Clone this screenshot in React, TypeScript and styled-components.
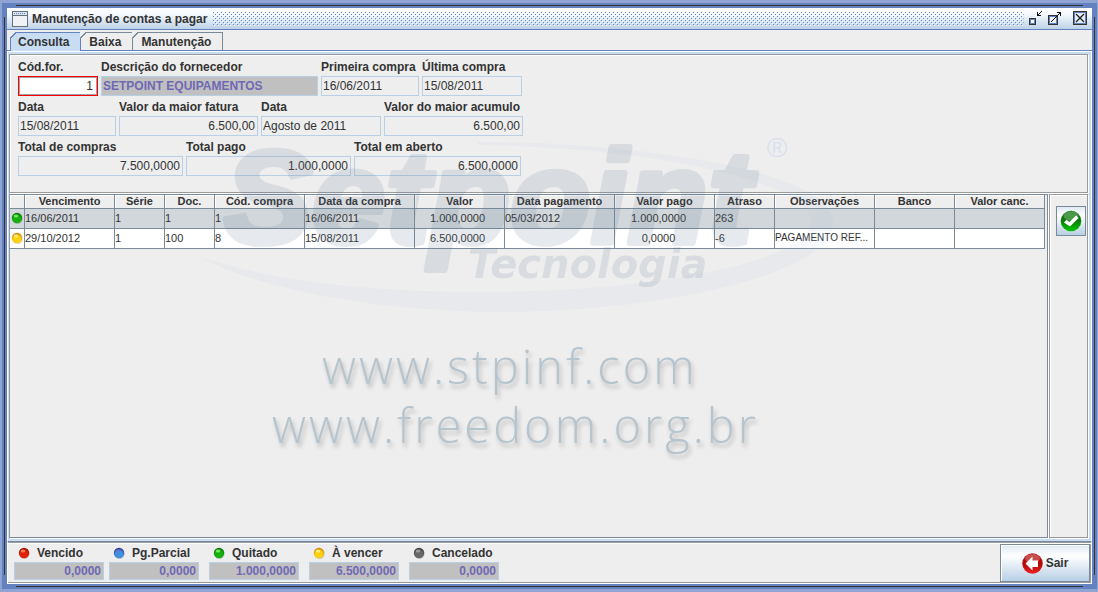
import React from "react";
import styled, { createGlobalStyle, css } from "styled-components";

const c = {
  blue: "#6382bf",
  panel: "#eeeeee",
  line: "#7a8a99",
  soft: "#b8cfe5",
  tab: "#c8ddf2",
  etch: "#9a9a9a",
  text: "#333333",
  gray: "#c0c0c0",
  violet: "#7068b4",
};

const GlobalStyle = createGlobalStyle`
  * { box-sizing: border-box; }
  body {
    margin: 0;
    font: 12px/16px "Liberation Sans", Arial, sans-serif;
    color: ${c.text};
  }
  input, button { font: inherit; color: inherit; }
`;

const Desktop = styled.div`
  display: flex;
  min-height: 100vh;
  padding: 3px 1px 3px 2px;
  background: #90a4d4;
`;

const Frame = styled.main`
  position: relative;
  flex: 1;
  min-width: 0;
  display: flex;
  flex-direction: column;
  padding: 5px;
  background: ${c.blue};
  &::before, &::after {
    content: "";
    position: absolute;
    pointer-events: none;
    border: 0 solid ${c.text};
  }
  &::before { inset: 2px 14px; border-width: 1px 0; }
  &::after { inset: 14px 2px; border-width: 0 1px; }
`;

const TitleBar = styled.header`
  display: flex;
  align-items: center;
  height: 22px;
  padding: 0 3px 0 5px;
  border-bottom: 1px solid ${c.blue};
  background: linear-gradient(#ffffff, #f4f8fc 30%, #bdd2e7);
`;

const Title = styled.h1`
  margin: 0 6px 0 4px;
  font-size: 12px;
  line-height: 16px;
  font-weight: bold;
`;

const Grip = styled.svg`
  flex: 1;
  min-width: 0;
  height: 14px;
  margin-top: 1px;
`;

const WindowButtons = styled.div`
  display: flex;
  gap: 4px;
  margin-left: 2px;
`;

const WindowButton = styled.button`
  display: block;
  width: 18px;
  height: 18px;
  padding: 0;
  border: 0;
  background: none;
  svg { display: block; }
  &:last-child { margin-left: 1px; }
`;

const Tabs = styled.div`
  display: flex;
  height: 21px;
  padding: 2px 0 0 3px;
  background: ${c.panel};
  border-bottom: 1px solid ${c.blue};
`;

const Tab = styled.button<{ $active?: boolean }>`
  position: relative;
  height: ${(p) => (p.$active ? 19 : 18)}px;
  padding: 0 11px 0 8px;
  border: 1px solid ${c.line};
  border-width: 1px 1px 0 0;
  background: ${c.panel};
  font-weight: bold;
  line-height: 16px;
  &::before {
    content: "";
    position: absolute;
    left: -1px;
    top: -1px;
    width: 8px;
    height: 8px;
    background: linear-gradient(135deg, ${c.panel} 0 4px, ${c.line} 4px 5px, transparent 5px);
  }
  ${(p) =>
    p.$active &&
    css`
      padding: 0 11px 0 7px;
      border-color: ${c.blue};
      border-left-width: 1px;
      background: ${c.tab};
      &::before {
        background: linear-gradient(135deg, ${c.panel} 0 4px, ${c.blue} 4px 5px, transparent 5px);
      }
    `}
`;

const Content = styled.section`
  flex: 1;
  display: flex;
  flex-direction: column;
  gap: 1px;
  padding: 2px 3px 3px 1px;
  background: ${c.tab};
  border: 1px solid #ffffff;
  border-bottom: 0;
`;

const panelEdge = css`
  border: 1px solid ${c.etch};
  box-shadow: 1px 1px 0 #ffffff, inset 1px 1px 0 #ffffff;
  background: ${c.panel};
`;

const FormPanel = styled.form`
  ${panelEdge}
  padding: 1px 8px 16px;
`;

const FieldRow = styled.div`
  display: flex;
  gap: 3px;
`;

const FieldBox = styled.label<{ $w: number }>`
  display: flex;
  flex-direction: column;
  flex: none;
  width: ${(p) => p.$w}px;
  padding-top: 2px;
  font-weight: bold;
  line-height: 18px;
  white-space: nowrap;
`;

type Look = "plain" | "focus" | "shade";

const Input = styled.input<{ $right?: boolean; $look?: Look }>`
  width: 100%;
  height: 20px;
  padding: 0 2px 0 1px;
  border: 1px solid ${c.soft};
  border-radius: 0;
  outline: 0;
  background: ${c.panel};
  font-weight: normal;
  text-align: ${(p) => (p.$right ? "right" : "left")};
  ${(p) =>
    p.$look === "shade" &&
    css`
      background: ${c.gray};
      color: ${c.violet};
      font-weight: bold;
    `}
  ${(p) =>
    p.$look === "focus" &&
    css`
      border-color: #ff0000;
      background: #ffffff;
      box-shadow: inset 1px 1px 0 #a0a0a0, inset -1px -1px 0 #a0a0a0;
      padding-right: 4px;
    `}
`;

const Work = styled.div`
  flex: 1;
  display: flex;
  gap: 1px;
`;

const ScrollArea = styled.div`
  flex: 1;
  min-width: 0;
  overflow: hidden;
  border: 1px solid ${c.line};
  border-left-color: ${c.etch};
  box-shadow: 1px 1px 0 #ffffff;
  background: ${c.panel};
`;

const Table = styled.table`
  width: 1035px;
  table-layout: fixed;
  border-collapse: separate;
  border-spacing: 0;
  font-size: 11px;
  th, td {
    padding: 0;
    border: 0 solid ${c.line};
    border-width: 0 1px 1px 0;
    overflow: hidden;
    white-space: nowrap;
  }
  th {
    height: 14px;
    line-height: 13px;
    background: ${c.panel};
    box-shadow: inset 1px 1px 0 #ffffff;
    text-align: center;
  }
  td {
    height: 20px;
    line-height: 18px;
    text-align: left;
    vertical-align: top;
  }
`;

const Row = styled.tr<{ $selected?: boolean }>`
  background: ${(p) => (p.$selected ? "#d2d7db" : "#ffffff")};
`;

const Amount = styled.td<{ $inset: number }>`
  && {
    padding-right: ${(p) => p.$inset}px;
    text-align: center;
  }
`;

const Note = styled.td`
  font-size: 10px;
`;

const StatusCell = styled.td`
  svg { display: block; margin: 3px auto 0; }
`;

const SidePanel = styled.div`
  ${panelEdge}
  width: 39px;
  padding: 11px 0 0 6px;
`;

const ActionButton = styled.button`
  display: flex;
  align-items: center;
  justify-content: center;
  gap: 3px;
  padding: 0;
  border: 1px solid ${c.line};
  background: linear-gradient(#dfe9f3, #ffffff 30%, ${c.soft});
  font-weight: bold;
`;

const SquareButton = styled(ActionButton)`
  width: 30px;
  height: 30px;
`;

const ExitButton = styled(ActionButton)`
  width: 90px;
  height: 38px;
  box-shadow: inset 1px 1px 0 #ffffff;
`;

const Footer = styled.footer`
  display: flex;
  justify-content: space-between;
  height: 43px;
  padding: 2px 1px 0 6px;
  border: 1px solid #ffffff;
  border-top: 1px solid ${c.line};
  background: ${c.panel};
  box-shadow: inset 0 1px 0 ${c.etch}, inset 0 2px 0 #ffffff, inset 0 -1px 0 ${c.etch}, inset -1px 0 0 ${c.etch};
`;

const Totals = styled.div`
  display: flex;
  gap: 10px;
`;

const Total = styled.label`
  display: flex;
  flex-direction: column;
  width: 90px;
  font-weight: bold;
  line-height: 18px;
  &:first-child { margin-right: -5px; }
  input { height: 18px; }
`;

const TotalName = styled.span`
  display: flex;
  align-items: center;
  gap: 7px;
  padding-left: 4px;
  svg { flex: none; }
`;

const Watermark = styled.svg`
  position: absolute;
  left: 193px;
  top: 127px;
  pointer-events: none;
`;

type Hue = "red" | "blue" | "green" | "yellow" | "gray";
const hues: Record<Hue, [string, string, string]> = {
  red: ["#ff9a80", "#e02008", "#901000"],
  blue: ["#7070d0", "#3f90e0", "#301870"],
  green: ["#90ff70", "#18b010", "#086008"],
  yellow: ["#fff8a0", "#ffd010", "#c07000"],
  gray: ["#b0b0b0", "#686868", "#303030"],
};

const Ball = ({ hue, id }: { hue: Hue; id: string }) => (
  <svg width="12" height="12" viewBox="0 0 12 12" aria-hidden="true">
    <defs>
      <radialGradient id={id} cx="0.5" cy="0.65" r="0.7">
        <stop offset="0" stopColor={hues[hue][1]} />
        <stop offset="0.5" stopColor={hues[hue][1]} />
        <stop offset="1" stopColor={hues[hue][2]} />
      </radialGradient>
    </defs>
    <circle cx="6.5" cy="6.8" r="5.2" fill="#000" opacity="0.15" />
    <circle cx="6" cy="6" r="5.2" fill={`url(#${id})`} />
    <ellipse cx="5" cy="4" rx="2.3" ry="1.5" fill={hues[hue][0]} opacity="0.75" />
  </svg>
);

const CheckIcon = () => (
  <svg width="22" height="22" viewBox="0 0 22 22" aria-hidden="true">
    <defs>
      <linearGradient id="ok" x1="0" y1="0" x2="0" y2="1">
        <stop offset="0" stopColor="#147814" />
        <stop offset="0.45" stopColor="#0c780c" />
        <stop offset="1" stopColor="#00c800" />
      </linearGradient>
    </defs>
    <circle cx="11" cy="11" r="10.3" fill="url(#ok)" />
    <ellipse cx="11" cy="6" rx="7.5" ry="4.5" fill="#fff" opacity="0.25" />
    <path d="M4 12.6 L6.6 9.8 L9.4 12 L16 5.4 L18.6 8 L10 16.6 Z" fill="#fff" />
  </svg>
);

const BackIcon = () => (
  <svg width="21" height="21" viewBox="0 0 21 21" aria-hidden="true">
    <defs>
      <linearGradient id="back" x1="0" y1="0" x2="0" y2="1">
        <stop offset="0" stopColor="#b81818" />
        <stop offset="0.5" stopColor="#b00808" />
        <stop offset="1" stopColor="#f02020" />
      </linearGradient>
    </defs>
    <circle cx="10.5" cy="10.5" r="10.2" fill="url(#back)" />
    <ellipse cx="10.5" cy="5.5" rx="7.5" ry="4.5" fill="#fff" opacity="0.25" />
    <path d="M3.5 10.5 L10.5 3.5 V7.5 H16 V14 H10.5 V17.5 Z" fill="#fff" />
  </svg>
);

const WindowIcon = () => (
  <svg width="16" height="16" viewBox="0 0 16 16" aria-hidden="true" shapeRendering="crispEdges">
    <rect x="0.5" y="0.5" width="15" height="15" rx="1" fill="#eef2f6" stroke="#65707c" />
    <rect x="1" y="1" width="14" height="3" fill="#dbe6f2" />
    <path d="M2 2.5h12" stroke={c.blue} strokeDasharray="1 1" />
    <path d="M1 4.5h14" stroke="#65707c" />
  </svg>
);

const MinimizeIcon = () => (
  <svg width="18" height="18" viewBox="0 0 18 18" aria-hidden="true" shapeRendering="crispEdges">
    <rect x="3.5" y="8.5" width="6" height="6" fill="#fff" stroke={c.text} />
    <rect x="4.5" y="9.5" width="4" height="4" fill="#fff" stroke={c.blue} />
    <path d="M15.5 1.5L12 5M11.5 2v4M11 5.5h4" stroke="#111" fill="none" />
  </svg>
);

const RestoreIcon = () => (
  <svg width="18" height="18" viewBox="0 0 18 18" aria-hidden="true" shapeRendering="crispEdges">
    <rect x="0.5" y="5.5" width="9" height="9" fill="#fff" stroke={c.text} />
    <rect x="1.5" y="6.5" width="7" height="7" fill="#eaf0f8" stroke={c.blue} />
    <path d="M3 12L12 3M9 2.5h4M12.5 2v4" stroke="#111" fill="none" />
  </svg>
);

const CloseIcon = () => (
  <svg width="18" height="18" viewBox="0 0 18 18" aria-hidden="true">
    <rect x="2.5" y="1.5" width="13" height="13" fill="#fff" stroke={c.text} />
    <rect x="3.5" y="2.5" width="11" height="11" fill="#e4ecf6" stroke={c.blue} />
    <path d="M5 4l8 8M13 4l-8 8" stroke="#222" strokeWidth="1.3" />
  </svg>
);

const GripDots = () => (
  <Grip aria-hidden="true">
    <defs>
      <pattern id="grip" width="4" height="4" patternUnits="userSpaceOnUse">
        <path d="M0 0h1v1H0zM2 2h1v1H2z" fill="#5f86d6" />
        <path d="M1 1h1v1H1zM3 3h1v1H3z" fill="#ffffff" />
      </pattern>
    </defs>
    <rect width="100%" height="100%" fill="url(#grip)" />
  </Grip>
);

const Logo = () => (
  <Watermark width="640" height="340" viewBox="195 130 640 340" aria-hidden="true">
    <path
      d="M478 142 C620 141 833 168 833 222 C833 275 660 312 500 312 C380 312 260 290 200 257 C280 283 380 292 480 292 C660 292 811 260 811 222 C811 180 650 148 478 145 Z"
      fill="rgba(150,175,220,0.08)"
    />
    <g opacity="0.15" fill="#607a94" stroke="#607a94" fontWeight="bold" fontStyle="italic">
      <text x="224" y="243" fontSize="132" strokeWidth="6" strokeLinejoin="round" fontFamily="Liberation Sans, Arial, sans-serif">
        Setpoint
      </text>
      <text x="468" y="278" fontSize="40" stroke="none" fontFamily="DejaVu Sans, Verdana, sans-serif">
        Tecnologia
      </text>
    </g>
    <text x="777" y="157" textAnchor="middle" fontSize="28" fill="#d9e0ee" fontFamily="Liberation Sans, Arial, sans-serif">
      ®
    </text>
    <g
      fontFamily="Open Sans, sans-serif"
      fontWeight="300"
      fontSize="47"
      letterSpacing="3"
      fill="#b6c4ce"
      style={{ filter: "drop-shadow(2px 4px 2px rgba(0,0,0,0.2))" }}
    >
      <text x="322" y="384">www.stpinf.com</text>
      <text x="272" y="443">www.freedom.org.br</text>
    </g>
  </Watermark>
);

interface FieldProps {
  label: string;
  value: string;
  w: number;
  right?: boolean;
  look?: Look;
}

const Field = ({ label, value, w, right, look }: FieldProps) => (
  <FieldBox $w={w}>
    {label}
    <Input defaultValue={value} readOnly={look !== "focus"} $right={right} $look={look} />
  </FieldBox>
);

const fieldRows: FieldProps[][] = [
  [
    { label: "Cód.for.", value: "1", w: 80, right: true, look: "focus" },
    { label: "Descrição do fornecedor", value: "SETPOINT EQUIPAMENTOS", w: 217, look: "shade" },
    { label: "Primeira compra", value: "16/06/2011", w: 98 },
    { label: "Última compra", value: "15/08/2011", w: 100 },
  ],
  [
    { label: "Data", value: "15/08/2011", w: 98 },
    { label: "Valor da maior fatura", value: "6.500,00", w: 139, right: true },
    { label: "Data", value: "Agosto de 2011", w: 120 },
    { label: "Valor do maior acumulo", value: "6.500,00", w: 139, right: true },
  ],
  [
    { label: "Total de compras", value: "7.500,0000", w: 165, right: true },
    { label: "Total pago", value: "1.000,0000", w: 165, right: true },
    { label: "Total em aberto", value: "6.500,0000", w: 167, right: true },
  ],
];

const columns: [string, number][] = [
  ["", 15],
  ["Vencimento", 90],
  ["Série", 50],
  ["Doc.", 50],
  ["Cód. compra", 90],
  ["Data da compra", 110],
  ["Valor", 90],
  ["Data pagamento", 110],
  ["Valor pago", 100],
  ["Atraso", 60],
  ["Observações", 100],
  ["Banco", 80],
  ["Valor canc.", 90],
];

const bills = [
  { hue: "green" as Hue, due: "16/06/2011", serie: "1", doc: "1", code: "1", bought: "16/06/2011", value: "1.000,0000", paidOn: "05/03/2012", paid: "1.000,0000", late: "263", note: "" },
  { hue: "yellow" as Hue, due: "29/10/2012", serie: "1", doc: "100", code: "8", bought: "15/08/2011", value: "6.500,0000", paidOn: "", paid: "0,0000", late: "-6", note: "PAGAMENTO REF..." },
];

const totals: { name: string; value: string; hue: Hue }[] = [
  { name: "Vencido", value: "0,0000", hue: "red" },
  { name: "Pg.Parcial", value: "0,0000", hue: "blue" },
  { name: "Quitado", value: "1.000,0000", hue: "green" },
  { name: "À vencer", value: "6.500,0000", hue: "yellow" },
  { name: "Cancelado", value: "0,0000", hue: "gray" },
];

export default function App() {
  return (
    <Desktop>
      <GlobalStyle />
      <Frame>
        <TitleBar>
          <WindowIcon />
          <Title>Manutenção de contas a pagar</Title>
          <GripDots />
          <WindowButtons>
            <WindowButton aria-label="Minimizar"><MinimizeIcon /></WindowButton>
            <WindowButton aria-label="Restaurar"><RestoreIcon /></WindowButton>
            <WindowButton aria-label="Fechar"><CloseIcon /></WindowButton>
          </WindowButtons>
        </TitleBar>
        <Tabs role="tablist">
          <Tab role="tab" aria-selected $active>Consulta</Tab>
          <Tab role="tab">Baixa</Tab>
          <Tab role="tab">Manutenção</Tab>
        </Tabs>
        <Content>
          <FormPanel>
            {fieldRows.map((row, i) => (
              <FieldRow key={i}>
                {row.map((f, j) => <Field key={j} {...f} />)}
              </FieldRow>
            ))}
          </FormPanel>
          <Work>
            <ScrollArea>
              <Table>
                <colgroup>
                  {columns.map(([name, width]) => <col key={name} width={width} />)}
                </colgroup>
                <thead>
                  <tr>{columns.map(([name]) => <th key={name} scope="col">{name}</th>)}</tr>
                </thead>
                <tbody>
                  {bills.map((b, i) => (
                    <Row key={b.due} $selected={i === 0}>
                      <StatusCell><Ball hue={b.hue} id={`bill-${i}`} /></StatusCell>
                      <td>{b.due}</td>
                      <td>{b.serie}</td>
                      <td>{b.doc}</td>
                      <td>{b.code}</td>
                      <td>{b.bought}</td>
                      <Amount $inset={4}>{b.value}</Amount>
                      <td>{b.paidOn}</td>
                      <Amount $inset={12}>{b.paid}</Amount>
                      <td>{b.late}</td>
                      <Note>{b.note}</Note>
                      <td />
                      <td />
                    </Row>
                  ))}
                </tbody>
              </Table>
            </ScrollArea>
            <SidePanel>
              <SquareButton aria-label="Confirmar"><CheckIcon /></SquareButton>
            </SidePanel>
          </Work>
        </Content>
        <Footer>
          <Totals>
            {totals.map((t) => (
              <Total key={t.name}>
                <TotalName><Ball hue={t.hue} id={`total-${t.hue}`} />{t.name}</TotalName>
                <Input readOnly defaultValue={t.value} $right $look="shade" />
              </Total>
            ))}
          </Totals>
          <ExitButton><BackIcon />Sair</ExitButton>
        </Footer>
        <Logo />
      </Frame>
    </Desktop>
  );
}
